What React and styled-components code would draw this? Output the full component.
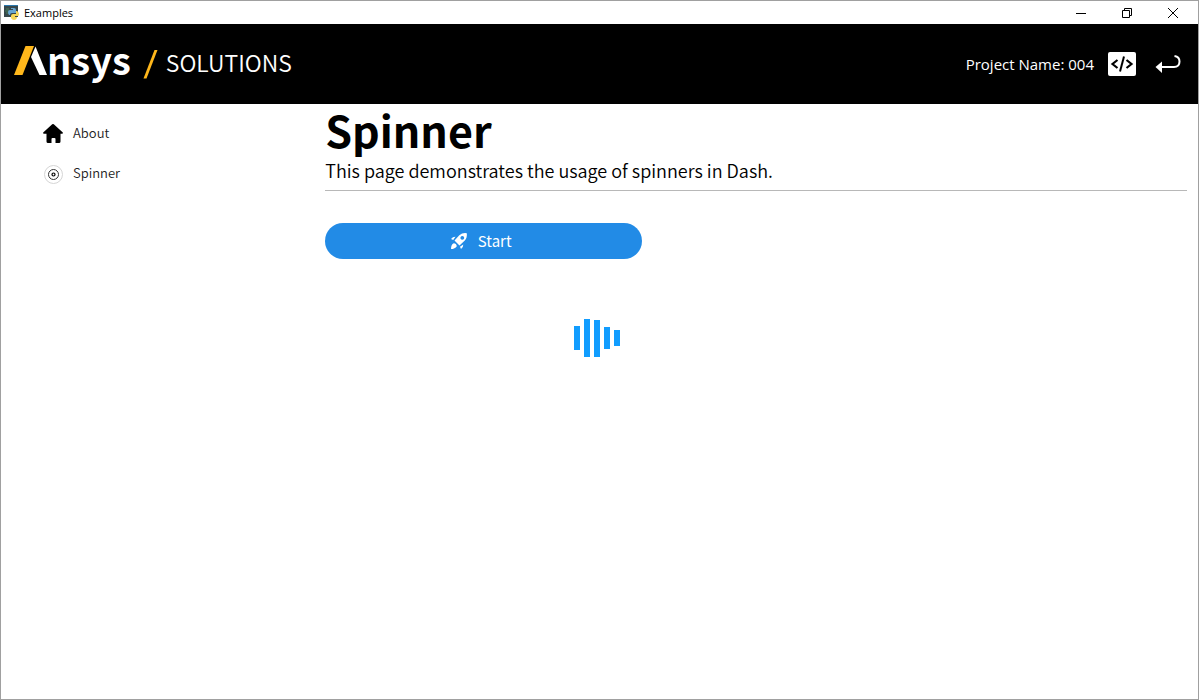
import React from "react";
import styled, { createGlobalStyle } from "styled-components";

const sans = `"Noto Sans CJK SC", "Noto Sans", sans-serif`;
const system = `"Open Sans", "Noto Sans", sans-serif`;

const GlobalStyle = createGlobalStyle`
  *, *::before, *::after { box-sizing: border-box; }
  body { margin: 0; background: #fff; color: #000; font-family: ${sans}; }
  h1, p, ul { margin: 0; padding: 0; }
  button { border: 0; padding: 0; background: none; color: inherit; font: inherit; cursor: pointer; }
`;

const Window = styled.div`
  display: flex;
  flex-direction: column;
  min-height: 100vh;
  border: 1px solid #a0a0a0;
`;

const TitleBar = styled.div`
  display: flex;
  align-items: center;
  height: 23px;
  padding-left: 3px;
  font-family: ${system};
  font-size: 11px;
  line-height: 16px;
`;

const WindowTitle = styled.span`
  flex: 1;
  padding-left: 5px;
`;

const WindowButton = styled.button`
  display: flex;
  align-items: center;
  justify-content: center;
  width: 46px;
  height: 22px;
`;

const WindowButtons = styled.div`
  display: flex;
  padding-right: 2px;
`;

const Header = styled.header`
  display: flex;
  align-items: center;
  height: 80px;
  padding: 0 16px 0 11px;
  background: #000;
  color: #fff;
`;

const Brand = styled.a`
  display: flex;
  align-items: center;
  flex: 1;
  color: inherit;
  text-decoration: none;
`;

const Logo = styled.span`
  display: flex;
  align-items: flex-end;
  height: 40px;
  padding-bottom: 8px;
`;

const BrandName = styled.span`
  font-size: 38px;
  font-weight: 700;
  line-height: 34px;
`;

const Product = styled.span`
  padding: 0 0 4px 8px;
  font-size: 23px;
  font-weight: 350;
  line-height: 32px;
`;

const Slash = styled.svg`
  margin-left: 12px;
`;

const Project = styled.span`
  padding-right: 14px;
  font-family: ${system};
  font-size: 15px;
  line-height: 20px;
`;

const HeaderButton = styled.button`
  display: flex;
  margin-right: ${(p) => (p.$spaced ? "19px" : "0")};
`;

const Body = styled.div`
  display: flex;
  flex: 1;
`;

const Sidebar = styled.nav`
  flex: 0 0 27%;
  padding: 9px 0 0 41px;
`;

const NavList = styled.ul`
  list-style: none;
`;

const NavLink = styled.a`
  display: flex;
  align-items: center;
  gap: 10px;
  height: 40px;
  color: #222;
  font-size: 13px;
  font-weight: 350;
  line-height: 20px;
  text-decoration: none;
`;

const Main = styled.main`
  flex: 1;
  padding: 0 11px 0 1px;
`;

const Heading = styled.h1`
  font-size: 43px;
  font-weight: 700;
  line-height: 50px;
`;

const Intro = styled.p`
  padding: 2px 0 6px;
  border-bottom: 1px solid #b8b8b8;
  font-size: 18px;
  font-weight: 350;
  line-height: 28px;
`;

const Demo = styled.section`
  display: flex;
  flex-direction: column;
  gap: 60px;
  width: 63%;
  padding-top: 32px;
`;

const StartButton = styled.button`
  display: flex;
  align-items: center;
  justify-content: center;
  gap: 10px;
  width: 58.4%;
  height: 36px;
  padding-right: 6px;
  border-radius: 18px;
  background: #228be6;
  color: #fff;
  font-size: 15px;
  line-height: 20px;
`;

const Spinner = styled.div`
  display: flex;
  align-items: center;
  justify-content: center;
  gap: 4px;
  height: 38px;
`;

const Bar = styled.span`
  width: 6px;
  height: ${(p) => p.$height}px;
  background: #119dff;
`;

const AppIcon = () => (
  <svg width="15" height="15" viewBox="0 0 15 15" aria-hidden="true">
    <path d="M0 0h14v12H0z" fill="#37474b" />
    <path d="M0 0h14v1H0z" fill="#2b78ad" />
    <path d="M2 4h3M1 6h4M2 8h3" stroke="#48805a" />
    <path d="M7 3h3q2 0 2 2v3H8q-2 0-2 2H5q-1-1-1-3t2-2h3V4H7z" fill="#66a5d3" />
    <path d="M12 6h1q2 1 2 3t-1 2h-3v1h2v1q-1 2-3 2t-3-2v-2q0-2 2-2h3z" fill="#f5d657" />
  </svg>
);

const LogoMark = () => (
  <svg width="35" height="32" viewBox="0 0 35 32" aria-hidden="true">
    <path d="M13.500 2h8.500L10.500 31H2z" fill="#ffb71b" />
    <path d="M23.500 2.500L35 31H27.500L19 13z" fill="#fff" />
  </svg>
);

const RocketIcon = () => (
  <svg width="18" height="18" viewBox="0 0 18 18" aria-hidden="true">
    <path
      fillRule="evenodd"
      d="M16.800 1.200q.6 4.300-2 7.300L9.500 13.500 4.500 8.500 9.300 3.200q3.200-2.700 7.500-2zM12.300 4a1.900 1.900 0 1 0 .01 0z"
      fill="#fff"
    />
    <path d="M1 7q2-2.500 4.500-2.300L3.200 8zM11 17q2.500-2 2.300-4.500L10 14.800zM3.800 11.200q2.600 0 3 3Q5 17 1 17q0-4.500 2.800-5.800z" fill="#fff" />
  </svg>
);

const HomeIcon = () => (
  <svg width="21" height="21" viewBox="0 0 21 21" aria-hidden="true">
    <path
      d="M10.200 1.300q.8-.7 1.600 0l9 8.200q.4 1-.7 1.200H18.500v7.800q0 1.500-1.500 1.500H13.500v-4q0-1-1-1h-2q-1 0-1 1v4H6q-1.500 0-1.500-1.500v-7.800H1.900Q.8 10.500 1.200 9.500z"
      fill="#000"
    />
  </svg>
);

const TargetIcon = () => (
  <svg width="21" height="21" viewBox="0 0 21 21" fill="none" aria-hidden="true">
    <circle cx="11.500" cy="11.500" r="9" stroke="#d5d5d5" strokeWidth="1" />
    <circle cx="11.500" cy="11.500" r="5" stroke="#333" strokeWidth="1" />
    <circle cx="11.500" cy="11.500" r="1.500" stroke="#000" strokeWidth="1.200" />
  </svg>
);

const CodeIcon = () => (
  <svg width="28" height="24" viewBox="0 0 28 24" fill="none" aria-hidden="true">
    <rect width="28" height="24" rx="2" fill="#fff" />
    <path d="M9.500 8L4.500 12l5 4M18.500 8l5 4-5 4" stroke="#000" strokeWidth="2.200" />
    <path d="M16 4.500L12 19.500" stroke="#000" strokeWidth="2" />
  </svg>
);

const ReturnIcon = () => (
  <svg width="27" height="20" viewBox="0 0 27 20" fill="none" aria-hidden="true">
    <path d="M19.500 2q5 .8 5 5.500 0 5.500-5.500 5.500H6" stroke="#fff" strokeWidth="2" />
    <path d="M7 7.500v11.500L.5 13z" fill="#fff" />
  </svg>
);

const barHeights = [24, 38, 37, 22, 16];

export default function App() {
  return (
    <>
      <GlobalStyle />
      <Window>
        <TitleBar>
          <AppIcon />
          <WindowTitle>Examples</WindowTitle>
          <WindowButtons>
            <WindowButton aria-label="Minimize">
              <svg width="10" height="10" viewBox="0 0 10 10" stroke="#000"><path d="M0 5.500h10" /></svg>
            </WindowButton>
            <WindowButton aria-label="Restore">
              <svg width="10" height="10" viewBox="0 0 10 10" stroke="#000" fill="none">
                <path d="M.5 2.500h7v7h-7zM2.500 2.500v-2h7v7h-2" />
              </svg>
            </WindowButton>
            <WindowButton aria-label="Close">
              <svg width="10" height="10" viewBox="0 0 10 10" stroke="#000"><path d="M0 0l10 10M10 0L0 10" /></svg>
            </WindowButton>
          </WindowButtons>
        </TitleBar>
        <Header>
          <Brand href="#" aria-label="Ansys Solutions">
            <Logo>
              <LogoMark />
              <BrandName>nsys</BrandName>
            </Logo>
            <Slash width="15" height="30" viewBox="0 0 15 30" aria-hidden="true">
              <path d="M11.500 1H14.500L3.500 29.500H.5z" fill="#ffb71b" />
            </Slash>
            <Product>SOLUTIONS</Product>
          </Brand>
          <Project>Project Name: 004</Project>
          <HeaderButton $spaced aria-label="Show code"><CodeIcon /></HeaderButton>
          <HeaderButton aria-label="Go back"><ReturnIcon /></HeaderButton>
        </Header>
        <Body>
          <Sidebar>
            <NavList>
              <li><NavLink href="#about"><HomeIcon />About</NavLink></li>
              <li><NavLink href="#spinner"><TargetIcon />Spinner</NavLink></li>
            </NavList>
          </Sidebar>
          <Main>
            <Heading>Spinner</Heading>
            <Intro>This page demonstrates the usage of spinners in Dash.</Intro>
            <Demo>
              <StartButton><RocketIcon />Start</StartButton>
              <Spinner role="status" aria-label="Loading">
                {barHeights.map((height, i) => <Bar key={i} $height={height} />)}
              </Spinner>
            </Demo>
          </Main>
        </Body>
      </Window>
    </>
  );
}
